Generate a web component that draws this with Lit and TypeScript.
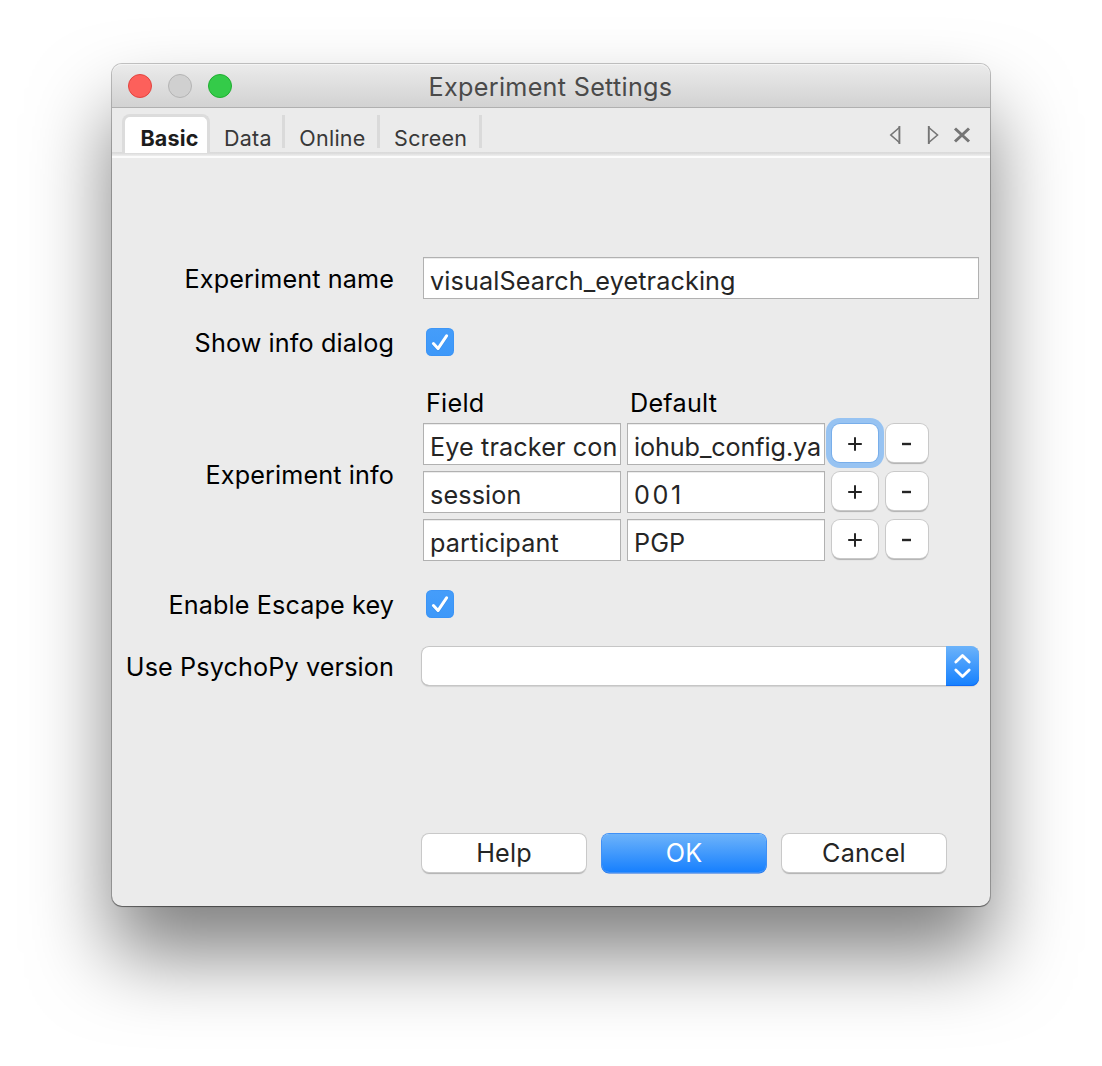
import { LitElement, html, svg, css } from "lit";
import { customElement, property, state } from "lit/decorators.js";
import { classMap } from "lit/directives/class-map.js";

interface InfoRow {
  field: string;
  value: string;
}

@customElement("check-box")
export class CheckBox extends LitElement {
  @property({ type: Boolean }) checked = false;

  static styles = css`
    :host { display: block; width: 28px; height: 28px; }
    .box {
      display: block;
      width: 28px;
      height: 28px;
      border-radius: 5.5px;
      background: linear-gradient(#459dfa, #3d98f9);
      box-shadow: inset 0 0 0 1px rgba(50, 135, 240, 0.3);
    }
  `;

  render() {
    return html`<svg class="box" viewBox="0 0 28 28">
      ${this.checked
        ? svg`<path d="M7.4 15.6 12 20.6 20.6 7.8" fill="none" stroke="#2c7fdc" stroke-opacity=".5" stroke-width="3" stroke-linecap="round" stroke-linejoin="round" transform="translate(0 1)"/>
            <path d="M7.4 15.6 12 20.6 20.6 7.8" fill="none" stroke="#fff" stroke-width="3" stroke-linecap="round" stroke-linejoin="round"/>`
        : null}
    </svg>`;
  }
}

@customElement("app-root")
export class AppRoot extends LitElement {
  @state() private tabs = ["Basic", "Data", "Online", "Screen"];
  @state() private active = "Basic";
  @state() private rows: InfoRow[] = [
    { field: "Eye tracker con", value: "iohub_config.ya" },
    { field: "session", value: "001" },
    { field: "participant", value: "PGP" },
  ];

  static styles = css`
    :host {
      display: block;
      box-sizing: border-box;
      width: 1102px;
      height: 1066px;
      padding: 64px 112px 0;
      overflow: hidden;
      background: #fff;
      color: #000;
      font: 25.2px/30px Inter, "Liberation Sans", sans-serif;
      letter-spacing: 0.12px;
    }
    * { box-sizing: border-box; }
    .window {
      display: flex;
      flex-direction: column;
      width: 878px;
      height: 842px;
      border-radius: 10px;
      background: #ebebeb;
      box-shadow: 0 0 0 1px rgba(0, 0, 0, 0.22), 0 1px 1px rgba(0, 0, 0, 0.35),
        0 48px 80px rgba(0, 0, 0, 0.5);
    }
    .titlebar {
      display: grid;
      grid-template-columns: 1fr auto 1fr;
      align-items: center;
      height: 44px;
      padding: 0 16px 0 16px;
      border-bottom: 1px solid #b0b0b0;
      border-radius: 10px 10px 0 0;
      background: linear-gradient(#ebebeb, #d2d2d2);
      box-shadow: inset 0 1px 0 #f4f4f4;
    }
    .lights { display: flex; gap: 16px; padding-top: 1px; }
    .light { width: 24px; height: 24px; border-radius: 50%; }
    .light.close { background: #fd605b; border: 1px solid #e2443f; }
    .light.min { background: #d0d0d0; border: 1px solid #b4b4b4; }
    .light.zoom { background: #34cb49; border: 1px solid #1fae30; }
    .title { padding: 3px 1px 0 0; color: #4a4a4a; letter-spacing: 0.29px; }

    .tabs {
      display: flex;
      height: 50px;
      padding: 6px 4px 0 10px;
      background: linear-gradient(#ebebeb 44px, #d9d9d9 44px, #dedede 46px, #ebebeb 47px, #ebebeb 48px, #fbfbfb 48px);
      color: #383838;
      font-size: 21.5px;
      line-height: 26px;
      letter-spacing: 0.25px;
    }
    .tab {
      height: 33px;
      margin-top: 1px;
      padding: 10px 11.5px 0 14px;
      border-right: 3px solid #dadada;
    }
    .tab.data { padding: 10px 10.5px 0 14px; }
    .tab.active {
      height: 39px;
      margin-top: 0;
      width: 88px;
      padding: 7.5px 0 0 15.5px;
      border: 3px solid #dcdcdc;
      border-bottom: 0;
      border-radius: 8px 8px 0 0;
      background: #fff;
      color: #1c1c1c;
      font-weight: 700;
      letter-spacing: 0.15px;
    }
    .tabtools { margin-left: auto; width: 100px; height: 30px; padding-top: 5px; }
    .tools { display: block; }

    .form {
      display: grid;
      grid-template-columns: 281.5px 556px;
      grid-template-rows: 42px 28px 176px 28px 40px;
      row-gap: 29px;
      column-gap: 29.5px;
      padding-top: 99px;
    }
    .label {
      align-self: center;
      margin-right: -0.5px;
      text-align: right;
      white-space: nowrap;
      padding-top: 2px;
    }
    .label.tall { padding-top: 4px; }
    .label.last { padding-top: 0; }
    .text {
      height: 42px;
      padding: 8px 0 0 6px;
      border: 1px solid #b1b1b1;
      box-shadow: inset 0 1px 0 #ececec;
      background: #fff;
      color: #252525;
      white-space: nowrap;
      overflow: hidden;
    }
    .check { margin-left: 3px; }
    .info { margin-top: 4px; }
    .heads { display: grid; grid-template-columns: 198px 198px; gap: 6px; height: 34px; padding-left: 3px; }
    .heads span { line-height: 28px; letter-spacing: 0.25px; }
    .row {
      display: grid;
      grid-template-columns: 198px 198px 48px 44px;
      column-gap: 6px;
      height: 48px;
    }
    .digits { letter-spacing: 2.6px; }
    .tight { letter-spacing: -0.1px; }
    .push {
      display: flex;
      align-items: center;
      justify-content: center;
      height: 38px;
      border-radius: 8px;
      background: #fff;
      color: #252525;
      box-shadow: 0 0 0 1px #c9c9c9, 0 1.5px 1px rgba(0, 0, 0, 0.25);
    }
    .row .push { width: calc(100% - 2px); margin-left: 1px; margin-top: 1px; }
    .glyph { display: block; margin: 2px 0 0 -1px; }
    .row .push.focus {
      width: 46px;
      box-shadow: 0 0 0 1px #78aeea, 0 0 0 6px #97c3f2;
    }
    .combo {
      display: flex;
      width: 558px;
      margin-left: -2px;
      height: 40px;
      margin-top: -1px;
      border-radius: 8px;
      background: #fff;
      box-shadow: inset 0 0 0 1px #c6c6c6, inset 0 -1px 0 #adadad, 0 1px 1px rgba(0, 0, 0, 0.1);
    }
    .stepper {
      width: 33px;
      height: 40px;
      margin-left: auto;
      border-radius: 0 8px 8px 0;
      background: linear-gradient(#6cb3fa, #1580fe);
      box-shadow: inset 0 -1px 0 #0f6bf5;
    }
    .actions {
      display: grid;
      grid-template-columns: repeat(3, 164px);
      gap: 16px;
      margin-top: 147px;
      padding-left: 310px;
    }
    .actions .push { height: 38px; border-radius: 7px; letter-spacing: 0.2px; }
    .actions .push.primary {
      color: #fff;
      background: linear-gradient(#6db3fa, #1780fe);
      box-shadow: 0 0 0 1px #3f90f6, 0 1px 0 0.5px #1267e6;
    }
  `;

  private renderTab(name: string) {
    return html`<div class=${classMap({ tab: true, active: name === this.active, data: name === "Data" })}>${name}</div>`;
  }

  private renderRow(row: InfoRow, index: number) {
    return html`<div class="row">
      <div class="text">${row.field}</div>
      <div class=${classMap({ text: true, digits: /^\d+$/.test(row.value), tight: row.value.includes("_") })}>${row.value}</div>
      <div class=${classMap({ push: true, focus: index === 0 })}>
        <svg class="glyph" width="16" height="16" viewBox="0 0 16 16"><path d="M8 1.2v13.6M1.2 8H14.8" stroke="#252525" stroke-width="2" fill="none"/></svg>
      </div>
      <div class="push">
        <svg class="glyph" width="14" height="4" viewBox="0 0 14 4"><path d="M2 2H11" stroke="#252525" stroke-width="2.4"/></svg>
      </div>
    </div>`;
  }

  render() {
    return html`<div class="window">
      <div class="titlebar">
        <div class="lights">
          <span class="light close"></span><span class="light min"></span><span class="light zoom"></span>
        </div>
        <div class="title">Experiment Settings</div>
        <div></div>
      </div>
      <div class="tabs">
        ${this.tabs.map((t) => this.renderTab(t))}
        <div class="tabtools">
          <svg class="tools" width="100" height="32" viewBox="0 0 100 32" fill="none" stroke="#757575">
            <path d="M13.4 8.5 4.8 16 13.4 23.5" stroke-width="1.6"/>
            <path d="M13.4 7V25M42.8 7V25" stroke-width="1.9"/>
            <path d="M42.8 8.5 51.5 16 42.8 23.5" stroke-width="1.6"/>
            <path d="M69 9.5 83 22.5M83 9.5 69 22.5" stroke-width="3"/>
          </svg>
        </div>
      </div>
      <div class="form">
        <div class="label">Experiment name</div>
        <div class="text">visualSearch_eyetracking</div>
        <div class="label">Show info dialog</div>
        <check-box class="check" checked></check-box>
        <div class="label tall">Experiment info</div>
        <div class="info">
          <div class="heads"><span>Field</span><span>Default</span></div>
          ${this.rows.map((r, i) => this.renderRow(r, i))}
        </div>
        <div class="label">Enable Escape key</div>
        <check-box class="check" checked></check-box>
        <div class="label last">Use PsychoPy version</div>
        <div class="combo">
          <svg class="stepper" viewBox="0 0 33 40"><path d="M9.8 16 16.5 9.5 23.2 16M9.8 24 16.5 30.5 23.2 24" fill="none" stroke="#fff" stroke-width="2.8" stroke-linecap="round" stroke-linejoin="round"/></svg>
        </div>
      </div>
      <div class="actions">
        <div class="push">Help</div>
        <div class="push primary">OK</div>
        <div class="push">Cancel</div>
      </div>
    </div>`;
  }
}
